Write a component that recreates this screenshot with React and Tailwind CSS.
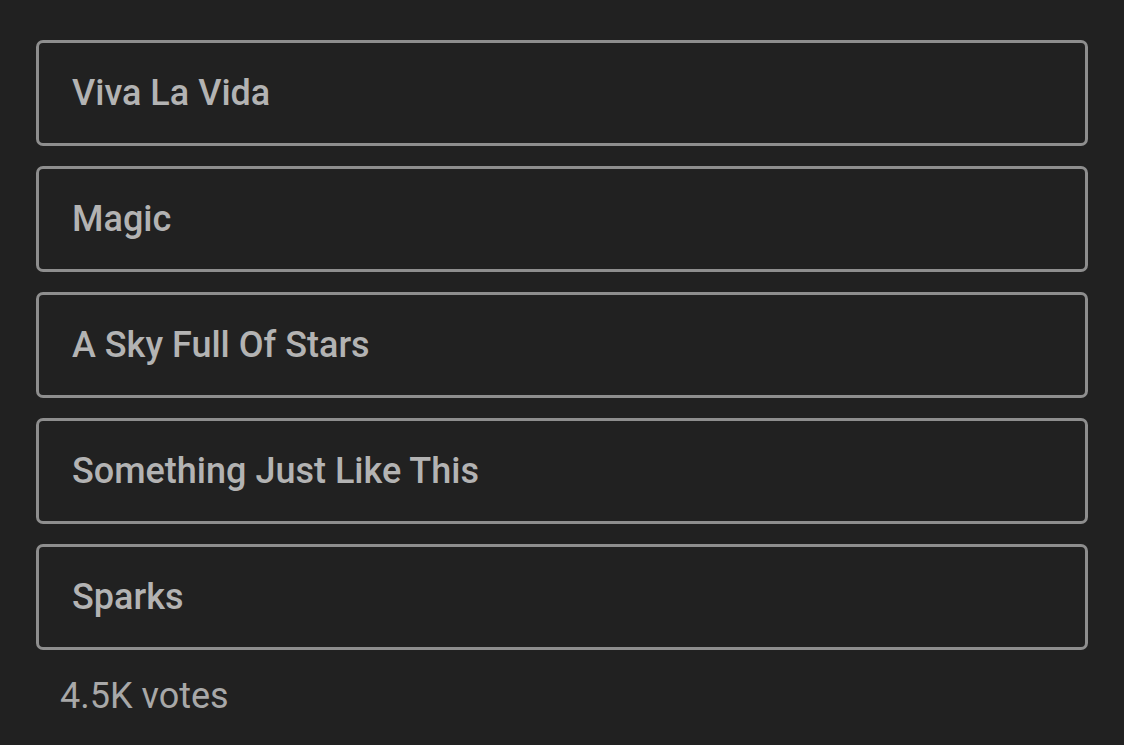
export default function App() {
  const items = ["Viva La Vida", "Magic", "A Sky Full Of Stars", "Something Just Like This", "Sparks"];
  return (
    <div className="w-[1124px] h-[745px] bg-[#212121] overflow-hidden" style={{ fontFamily: "Roboto, sans-serif" }}>
      <div className="pt-[40px] pl-[36px] pr-[36px] flex flex-col gap-[20px]">
        {items.map((t) => (
          <div key={t} className="h-[106px] border-[3px] border-[#8e8e8e] rounded-[7px] flex items-center pl-[33px]">
            <span className="text-[#b3b3b3] text-[36px] font-medium leading-none">{t}</span>
          </div>
        ))}
      </div>
      <div className="pl-[60px] pt-[28px] text-[#a8a8a8] text-[36px] leading-none">4.5K votes</div>
    </div>
  );
}
